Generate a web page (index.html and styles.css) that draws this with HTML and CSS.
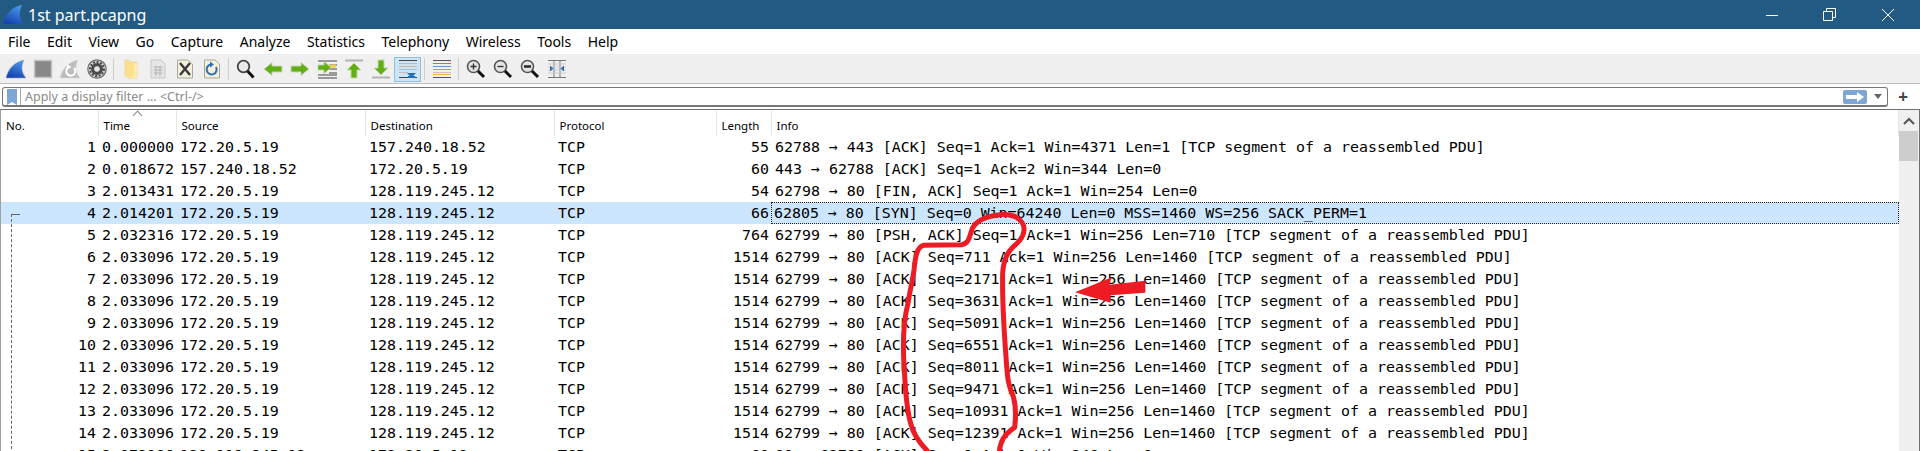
FILE: index.html

```html
<!DOCTYPE html>
<html lang="en">
<head>
  <meta charset="UTF-8" />
  <title>1st part.pcapng</title>
  <link rel="stylesheet" href="styles.css">
</head>
<body>
  <!-- Title bar -->
  <div class="titlebar">
    <svg class="app-icon" width="22" height="22" viewBox="0 0 22 22">
      <defs>
        <linearGradient id="fin" x1="0.7" y1="0" x2="0.3" y2="1">
          <stop offset="0" stop-color="#4a9be8"/>
          <stop offset="1" stop-color="#1340b0"/>
        </linearGradient>
      </defs>
      <path d="M1 20 C3 11 9 3 20 1 C17 7 17 14 21 20 Z" fill="url(#fin)"/>
    </svg>
    <span class="title-text">1st part.pcapng</span>
    <div class="window-btns">
      <svg width="14" height="14" viewBox="0 0 14 14"><path d="M1 7.5H13" stroke="#fff" fill="none"/></svg>
      <svg width="14" height="14" viewBox="0 0 14 14"><path d="M.5 3.5H9.5V12.5H.5Z M3.5 3.5V.5H12.5V9.5H9.5" stroke="#fff" fill="none"/></svg>
      <svg width="14" height="14" viewBox="0 0 14 14"><path d="M1 1L13 13M13 1L1 13" stroke="#fff" fill="none"/></svg>
    </div>
  </div>

  <!-- Menu -->
  <div class="menubar">
    <span>File</span><span>Edit</span><span>View</span><span>Go</span><span>Capture</span><span>Analyze</span><span>Statistics</span><span>Telephony</span><span>Wireless</span><span>Tools</span><span>Help</span>
  </div>

  <!-- Toolbar -->
  <div class="toolbar">
    <div class="tool"><svg viewBox="0 0 20 20"><path d="M0 19 C2 10 8 3 18 1 C15 7 15 13 20 19 Z" fill="url(#fin)" stroke="#9aa8c4" stroke-width=".6"/></svg></div>
    <div class="tool"><svg viewBox="0 0 20 20"><rect x="1.5" y="1.5" width="17" height="17" fill="#888" stroke="#c4c4c4" stroke-width="1.5"/></svg></div>
    <div class="tool"><svg viewBox="0 0 20 20"><path d="M0 19 C2 10 8 3 18 1 C15 7 15 13 20 19 Z" fill="#bdbdbd" stroke="#d8d8d8" stroke-width=".6"/><path d="M14 9 A4.5 4.5 0 1 1 9 8" fill="none" stroke="#fff" stroke-width="2"/><path d="M7 5L11.5 8L7 10.5Z" fill="#fff"/></svg></div>
    <div class="tool"><svg viewBox="0 0 20 20"><circle cx="10" cy="10" r="9.2" fill="#d4d4d4" stroke="#6e6e6e" stroke-width="1.2"/><circle cx="10" cy="10" r="6" fill="#4a4a4a"/><circle cx="10" cy="10" r="7" fill="none" stroke="#4a4a4a" stroke-width="2" stroke-dasharray="2 1.6"/><circle cx="10" cy="10" r="2.8" fill="#e8e8e8"/></svg></div>
    <div class="sep"></div>
    <div class="tool"><svg viewBox="0 0 20 20"><path d="M4 1H8L9 3H16V19L8 19L4 17Z" fill="#fbe08e" stroke="#ecd48c" stroke-width=".8"/><path d="M13 4H16V19H8L13 16Z" fill="#ffeaa8"/></svg></div>
    <div class="tool"><svg viewBox="0 0 20 20"><path d="M3 1H13L17 5V19H3Z" fill="#e6e6e6" stroke="#c6c6c6"/><path d="M5.5 8H14.5M5.5 11H14.5M5.5 14H14.5M8 7V17M12 7V17" stroke="#b4b4b4" fill="none"/></svg></div>
    <div class="tool"><svg viewBox="0 0 20 20"><path d="M2.5 1H13L17.5 5V19H2.5Z" fill="#f4f0dc" stroke="#a8a8a0"/><path d="M5 4L15 16M15 4L5 16" stroke="#3a3a3a" stroke-width="2.4" fill="none"/></svg></div>
    <div class="tool"><svg viewBox="0 0 20 20"><path d="M2.5 1H13L17.5 5V19H2.5Z" fill="#f4f0dc" stroke="#a8a8a0"/><path d="M14 8A5 5 0 1 1 9 5.5" fill="none" stroke="#2f6fb5" stroke-width="2"/><path d="M8 2.5L12 5.5L8 8.5Z" fill="#2f6fb5"/></svg></div>
    <div class="sep"></div>
    <div class="tool"><svg viewBox="0 0 20 20"><circle cx="7.5" cy="7.5" r="5.8" fill="#eaeaea" stroke="#444" stroke-width="1.8"/><path d="M11.5 12L17.5 18.5" stroke="#111" stroke-width="3"/></svg></div>
    <div class="tool"><svg viewBox="0 0 20 20"><path d="M1 10L9 3.5V7H19V13H9V16.5Z" fill="#62ae14" stroke="#c8d8b4"/></svg></div>
    <div class="tool"><svg viewBox="0 0 20 20"><path d="M19 10L11 3.5V7H1V13H11V16.5Z" fill="#62ae14" stroke="#c8d8b4"/></svg></div>
    <div class="tool"><svg viewBox="0 0 20 20"><path d="M1 2H20M12 6H20M12 10H20M12 14H20M1 16H20M1 19H20" stroke="#444" fill="none"/><path d="M12 7H19" stroke="#f0d040" stroke-width="3"/><path d="M1 6H7V2.5L14 8.5L7 14.5V11H1Z" fill="#62ae14" stroke="#bcd4a4" stroke-width=".8"/></svg></div>
    <div class="tool"><svg viewBox="0 0 20 20"><path d="M1 1.5H19" stroke="#b4b4b4" stroke-width="2"/><path d="M10 4L17 11H13V19H7V11H3Z" fill="#62ae14" stroke="#c0d8a8"/></svg></div>
    <div class="tool"><svg viewBox="0 0 20 20"><path d="M1 18.5H19" stroke="#b4b4b4" stroke-width="2"/><path d="M10 16L17 9H13V1H7V9H3Z" fill="#62ae14" stroke="#c0d8a8"/></svg></div>
    <div class="tool tool-on"><svg viewBox="0 0 20 20"><path d="M1 1.5H19" stroke="#444"/><path d="M1 4.5H19M1 7.5H19M1 10.5H19M1 13.5H10" stroke="#bbb"/><path d="M1 18.5H19" stroke="#444"/><path d="M9 14H18L15 17H12Z M10 17H17V19H10Z" fill="#1f6fb8"/></svg></div>
    <div class="sep"></div>
    <div class="tool"><svg viewBox="0 0 20 20"><path d="M1 1.5H19" stroke="#555"/><path d="M1 4.5H19" stroke="#e06060"/><path d="M1 7.5H19" stroke="#6a8fd8"/><path d="M1 10.5H19" stroke="#80c050"/><path d="M1 13.5H19" stroke="#d8b8d0"/><path d="M1 15.5H19" stroke="#e8c020"/><path d="M1 18.5H19" stroke="#555"/></svg></div>
    <div class="sep"></div>
    <div class="tool"><svg viewBox="0 0 20 20"><circle cx="7.5" cy="7.5" r="6" fill="#e4e4e4" stroke="#555" stroke-width="1.6"/><path d="M4.5 7.5H10.5M7.5 4.5V10.5" stroke="#333" stroke-width="1.4"/><path d="M12 12L18 18" stroke="#111" stroke-width="3"/></svg></div>
    <div class="tool"><svg viewBox="0 0 20 20"><circle cx="7.5" cy="7.5" r="6" fill="#e4e4e4" stroke="#555" stroke-width="1.6"/><path d="M4.5 7.5H10.5" stroke="#333" stroke-width="1.4"/><path d="M12 12L18 18" stroke="#111" stroke-width="3"/></svg></div>
    <div class="tool"><svg viewBox="0 0 20 20"><circle cx="7.5" cy="7.5" r="6" fill="#e4e4e4" stroke="#555" stroke-width="1.6"/><path d="M4 7.5H11" stroke="#222" stroke-width="2.4"/><path d="M12 12L18 18" stroke="#111" stroke-width="3"/></svg></div>
    <div class="tool"><svg viewBox="0 0 20 20"><path d="M1 1.5H19M1 18.5H19M7 1V19M13 1V19" stroke="#777" fill="none"/><path d="M1 5H19M1 8H19M1 11H19M1 14H19" stroke="#ccc" fill="none"/><path d="M6.5 9.5L3 6.5V12.5Z M13.5 9.5L17 6.5V12.5Z" fill="#2f6fb5"/></svg></div>
  </div>

  <!-- Display filter -->
  <div class="filterbar">
    <div class="filter-box">
      <div class="bookmark"><svg width="10" height="16" viewBox="0 0 10 16"><path d="M0 0H10V16L5 13L0 16Z" fill="#7ba6d6"/></svg></div>
      <span class="filter-hint">Apply a display filter ... &lt;Ctrl-/&gt;</span>
      <div class="filter-apply"><svg width="18" height="10" viewBox="0 0 18 10"><path d="M0 3H11V0L18 5L11 10V7H0Z" fill="#fff"/></svg></div>
      <div class="filter-drop"></div>
    </div>
    <div class="filter-plus">+</div>
  </div>

  <!-- Packet list -->
  <div class="packets">
    <table class="packet-table">
      <colgroup>
        <col class="c-no"><col class="c-time"><col class="c-src"><col class="c-dst"><col class="c-proto"><col class="c-len"><col>
      </colgroup>
      <thead>
        <tr>
          <th>No.</th>
          <th class="sorted">Time</th>
          <th>Source</th>
          <th>Destination</th>
          <th>Protocol</th>
          <th>Length</th>
          <th>Info</th>
        </tr>
      </thead>
      <tbody>
        <tr><td class="num">1</td><td>0.000000</td><td>172.20.5.19</td><td>157.240.18.52</td><td>TCP</td><td class="num">55</td><td>62788 → 443 [ACK] Seq=1 Ack=1 Win=4371 Len=1 [TCP segment of a reassembled PDU]</td></tr>
        <tr><td class="num">2</td><td>0.018672</td><td>157.240.18.52</td><td>172.20.5.19</td><td>TCP</td><td class="num">60</td><td>443 → 62788 [ACK] Seq=1 Ack=2 Win=344 Len=0</td></tr>
        <tr><td class="num">3</td><td>2.013431</td><td>172.20.5.19</td><td>128.119.245.12</td><td>TCP</td><td class="num">54</td><td>62798 → 80 [FIN, ACK] Seq=1 Ack=1 Win=254 Len=0</td></tr>
        <tr class="selected"><td class="num">4</td><td>2.014201</td><td>172.20.5.19</td><td>128.119.245.12</td><td>TCP</td><td class="num">66</td><td class="focus">62805 → 80 [SYN] Seq=0 Win=64240 Len=0 MSS=1460 WS=256 SACK_PERM=1</td></tr>
        <tr><td class="num">5</td><td>2.032316</td><td>172.20.5.19</td><td>128.119.245.12</td><td>TCP</td><td class="num">764</td><td>62799 → 80 [PSH, ACK] Seq=1 Ack=1 Win=256 Len=710 [TCP segment of a reassembled PDU]</td></tr>
        <tr><td class="num">6</td><td>2.033096</td><td>172.20.5.19</td><td>128.119.245.12</td><td>TCP</td><td class="num">1514</td><td>62799 → 80 [ACK] Seq=711 Ack=1 Win=256 Len=1460 [TCP segment of a reassembled PDU]</td></tr>
        <tr><td class="num">7</td><td>2.033096</td><td>172.20.5.19</td><td>128.119.245.12</td><td>TCP</td><td class="num">1514</td><td>62799 → 80 [ACK] Seq=2171 Ack=1 Win=256 Len=1460 [TCP segment of a reassembled PDU]</td></tr>
        <tr><td class="num">8</td><td>2.033096</td><td>172.20.5.19</td><td>128.119.245.12</td><td>TCP</td><td class="num">1514</td><td>62799 → 80 [ACK] Seq=3631 Ack=1 Win=256 Len=1460 [TCP segment of a reassembled PDU]</td></tr>
        <tr><td class="num">9</td><td>2.033096</td><td>172.20.5.19</td><td>128.119.245.12</td><td>TCP</td><td class="num">1514</td><td>62799 → 80 [ACK] Seq=5091 Ack=1 Win=256 Len=1460 [TCP segment of a reassembled PDU]</td></tr>
        <tr><td class="num">10</td><td>2.033096</td><td>172.20.5.19</td><td>128.119.245.12</td><td>TCP</td><td class="num">1514</td><td>62799 → 80 [ACK] Seq=6551 Ack=1 Win=256 Len=1460 [TCP segment of a reassembled PDU]</td></tr>
        <tr><td class="num">11</td><td>2.033096</td><td>172.20.5.19</td><td>128.119.245.12</td><td>TCP</td><td class="num">1514</td><td>62799 → 80 [ACK] Seq=8011 Ack=1 Win=256 Len=1460 [TCP segment of a reassembled PDU]</td></tr>
        <tr><td class="num">12</td><td>2.033096</td><td>172.20.5.19</td><td>128.119.245.12</td><td>TCP</td><td class="num">1514</td><td>62799 → 80 [ACK] Seq=9471 Ack=1 Win=256 Len=1460 [TCP segment of a reassembled PDU]</td></tr>
        <tr><td class="num">13</td><td>2.033096</td><td>172.20.5.19</td><td>128.119.245.12</td><td>TCP</td><td class="num">1514</td><td>62799 → 80 [ACK] Seq=10931 Ack=1 Win=256 Len=1460 [TCP segment of a reassembled PDU]</td></tr>
        <tr><td class="num">14</td><td>2.033096</td><td>172.20.5.19</td><td>128.119.245.12</td><td>TCP</td><td class="num">1514</td><td>62799 → 80 [ACK] Seq=12391 Ack=1 Win=256 Len=1460 [TCP segment of a reassembled PDU]</td></tr>
        <tr><td class="num">15</td><td>2.072186</td><td>128.119.245.12</td><td>172.20.5.19</td><td>TCP</td><td class="num">60</td><td>80 → 62799 [ACK] Seq=1 Ack=1 Win=246 Len=0</td></tr>
      </tbody>
    </table>

    <div class="scrollbar">
      <svg class="scroll-up" width="12" height="8" viewBox="0 0 12 8"><path d="M1 7L6 2L11 7" stroke="#555" stroke-width="2" fill="none"/></svg>
      <div class="scroll-thumb"></div>
    </div>

    <!-- conversation bracket beside the selected packet -->
    <div class="related"></div>
  </div>

  <!-- Pen marks drawn over the screenshot -->
  <svg class="pen" viewBox="0 0 1500 783">
    <path d="M838 783 C842 755 850 735 884 712 C888 680 886 640 880 620 C866 590 862 570 858 500 C852 420 846 340 848 250 C850 215 858 190 880 170 C905 150 918 130 910 105 C900 82 875 72 840 74 C800 78 770 90 757 115 C748 140 748 160 725 164 L610 166 C590 172 586 200 582 240 C578 270 570 300 564 340 C548 400 548 470 553 540 C556 600 560 660 572 700 C580 735 600 760 622 783" fill="none" stroke="#ed1c24" stroke-width="15" stroke-linecap="round" stroke-linejoin="round"/>
    <path d="M1065 307 L1175 262 L1168 284 L1276 272 L1276 308 L1172 316 L1172 338 Z" fill="#ed1c24"/>
  </svg>
</body>
</html>
```

FILE: styles.css

```css
* { margin: 0; padding: 0; box-sizing: border-box; }
html, body { height: 451px; overflow: hidden; }
body { background: #fff; color: #000; font-family: "Noto Sans", Arial, sans-serif; position: relative; }

.titlebar { height: 29px; background: #235a84; color: #fff; display: flex; align-items: center; padding-left: 2px; }
.app-icon { margin-right: 4px; }
.title-text { font-size: 16px; }
.window-btns { margin-left: auto; display: flex; gap: 44px; padding-right: 25px; }

.menubar { height: 26px; display: flex; align-items: center; padding-left: 8px; gap: 16.5px; font-size: 14px; border-bottom: 1px solid #ececec; }

.toolbar { height: 29px; background: #f0f0f0; border-bottom: 1px solid #bdbdbd; display: flex; align-items: center; padding-left: 2px; }
.tool { width: 27px; height: 25px; display: flex; align-items: center; justify-content: center; }
.tool svg { width: 20px; height: 20px; }
.tool-on { background: #cde4f7; border: 1px solid #92c0e0; }
.sep { width: 1px; height: 22px; background: #cfcfcf; margin: 0 3px; }

.filterbar { height: 25px; padding: 3px 0 0 2px; display: flex; }
.filter-box { flex: 1; height: 20px; border: 1px solid #777; border-bottom-width: 2px; border-radius: 3px; display: flex; align-items: center; }
.bookmark { width: 18px; height: 100%; border-right: 1px solid #aaa; display: flex; align-items: center; justify-content: center; }
.filter-hint { color: #8a8a8a; font-size: 12.5px; padding-left: 4px; }
.filter-apply { margin-left: auto; width: 24px; height: 14px; background: #7ba6d6; border-radius: 2px; display: flex; align-items: center; justify-content: center; }
.filter-drop { width: 0; height: 0; border: 4px solid transparent; border-top: 5px solid #666; border-bottom: 0; margin: 0 5px 0 7px; }
.filter-plus { width: 32px; text-align: center; font-size: 17px; font-weight: 700; color: #444; line-height: 20px; padding-right: 2px; }

.packets { position: relative; height: 342px; display: flex; overflow: hidden; border-top: 1px solid #707070; border-left: 1px solid #a0a0a0; border-right: 1px solid #707070; }
.packet-table { flex: 1; border-collapse: collapse; table-layout: fixed; height: 0; }
.c-no { width: 97px; }
.c-time { width: 78px; }
.c-src { width: 189px; }
.c-dst { width: 189px; }
.c-proto { width: 162px; }
.c-len { width: 55px; }

.packet-table th { height: 26px; font-size: 11.5px; font-weight: 400; text-align: left; padding: 4px 0 0 5px; border-right: 1px solid #e6e6e6; position: relative; white-space: nowrap; }
.sorted::before { content: ""; position: absolute; left: 35px; top: 2px; width: 6px; height: 6px; border-left: 1px solid #888; border-top: 1px solid #888; transform: rotate(45deg); }

.packet-table td { height: 22px; font-family: "DejaVu Sans Mono", monospace; font-size: 14.93px; line-height: 20px; padding: 0 0 1px 4px; white-space: nowrap; }
.packet-table td.num { text-align: right; padding: 0 2px 1px 0; }
.selected td { background: #cce6ff; }
.packet-table td.focus { outline: 1px dotted #222; outline-offset: -1px; padding-left: 3px; }

.scrollbar { width: 20px; background: #f0f0f0; flex: none; position: relative; }
.scroll-up { position: absolute; left: 4px; top: 7px; }
.scroll-thumb { position: absolute; left: 0; right: 1px; top: 21px; height: 30px; background: #cdcdcd; }

.related { position: absolute; left: 10px; top: 104px; width: 9px; height: 240px; border-top: 1px solid #666; border-left: 1px dashed #666; }

.pen { position: absolute; left: 720px; top: 190px; width: 500px; height: 261px; }
```
